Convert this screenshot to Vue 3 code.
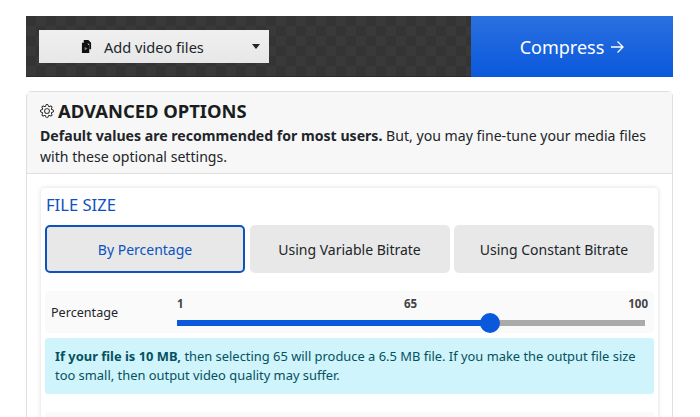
<script setup>
const tabs = [
  { label: 'By Percentage', active: true },
  { label: 'Using Variable Bitrate', active: false },
  { label: 'Using Constant Bitrate', active: false }
]
const fill = 66.9
</script>

<template>
  <div class="page">
    <div class="topbar">
      <div class="left">
        <button class="add">
          <svg class="fileicon" viewBox="0 0 12 14" width="11" height="13">
            <path d="M3 0h5l3 3v7H9V4H3z" fill="#111" />
            <path d="M1 3h5l3 3v8H1z" fill="#111" />
            <path d="M4 7.5l3 1.8-3 1.8z" fill="#888" />
          </svg>
          <span class="addtext">Add video files</span>
          <span class="caret"></span>
        </button>
      </div>
      <div class="compress">Compress <span class="arrow">
        <svg viewBox="0 0 14 14" width="14" height="14"><path d="M1 7h12M7.5 1.5L13 7l-5.5 5.5" fill="none" stroke="#fff" stroke-width="1.3" /></svg>
      </span></div>
    </div>

    <div class="card">
      <div class="cardhead">
        <h2 class="title">
          <svg class="gear" viewBox="0 0 16 16" width="14" height="14" fill="#222">
            <path d="M8 4.754a3.246 3.246 0 1 0 0 6.492 3.246 3.246 0 0 0 0-6.492zM5.754 8a2.246 2.246 0 1 1 4.492 0 2.246 2.246 0 0 1-4.492 0z" />
            <path d="M9.796 1.343c-.527-1.79-3.065-1.79-3.592 0l-.094.319a.873.873 0 0 1-1.255.52l-.292-.16c-1.64-.892-3.433.902-2.54 2.541l.159.292a.873.873 0 0 1-.52 1.255l-.319.094c-1.79.527-1.79 3.065 0 3.592l.319.094a.873.873 0 0 1 .52 1.255l-.16.292c-.892 1.64.901 3.434 2.541 2.54l.292-.159a.873.873 0 0 1 1.255.52l.094.319c.527 1.79 3.065 1.79 3.592 0l.094-.319a.873.873 0 0 1 1.255-.52l.292.16c1.64.893 3.434-.902 2.54-2.541l-.159-.292a.873.873 0 0 1 .52-1.255l.319-.094c1.79-.527 1.79-3.065 0-3.592l-.319-.094a.873.873 0 0 1-.52-1.255l.16-.292c.893-1.64-.902-3.433-2.541-2.54l-.292.159a.873.873 0 0 1-1.255-.52l-.094-.319zm-2.633.283c.246-.835 1.428-.835 1.674 0l.094.319a1.873 1.873 0 0 0 2.693 1.115l.291-.16c.764-.415 1.6.42 1.184 1.185l-.159.292a1.873 1.873 0 0 0 1.116 2.692l.318.094c.835.246.835 1.428 0 1.674l-.319.094a1.873 1.873 0 0 0-1.115 2.693l.16.291c.415.764-.42 1.6-1.185 1.184l-.291-.159a1.873 1.873 0 0 0-2.693 1.116l-.094.318c-.246.835-1.428.835-1.674 0l-.094-.319a1.873 1.873 0 0 0-2.692-1.115l-.292.16c-.764.415-1.6-.42-1.184-1.185l.159-.291A1.873 1.873 0 0 0 1.945 8.93l-.319-.094c-.835-.246-.835-1.428 0-1.674l.319-.094A1.873 1.873 0 0 0 3.06 4.377l-.16-.292c-.415-.764.42-1.6 1.185-1.184l.292.159a1.873 1.873 0 0 0 2.692-1.115l.094-.319z" />
          </svg>
          ADVANCED OPTIONS
        </h2>
        <p class="desc"><b>Default values are recommended for most users.</b> But, you may fine-tune your media files with these optional settings.</p>
      </div>

      <div class="cardbody">
        <div class="panel">
          <h3 class="paneltitle">FILE SIZE</h3>
          <div class="tabs">
            <button v-for="t in tabs" :key="t.label" class="tab" :class="{ active: t.active }">{{ t.label }}</button>
          </div>

          <div class="sliderrow">
            <div class="sliderlabel">Percentage</div>
            <div class="slider">
              <div class="scale"><span>1</span><span class="mid">65</span><span class="max">100</span></div>
              <div class="track">
                <div class="fill" :style="{ width: fill + '%' }"></div>
                <div class="thumb" :style="{ left: fill + '%' }"></div>
              </div>
            </div>
          </div>

          <div class="alert"><b>If your file is 10 MB,</b> then selecting 65 will produce a 6.5 MB file. If you make the output file size too small, then output video quality may suffer.</div>

          <div class="nextrow"></div>
        </div>
      </div>
    </div>
  </div>
</template>

<style scoped>
.page {
  height: 417px;
  overflow: hidden;
  box-sizing: border-box;
  padding: 16px 27px 0 26px;
  font-family: "Noto Sans", "Open Sans", sans-serif;
  color: #212529;
  background: #fff;
}
.topbar {
  display: flex;
  height: 61px;
}
.left {
  flex: 1;
  padding: 14px 13px;
  background-color: #363636;
  background-image: conic-gradient(#393939 25%, #343434 0 50%, #393939 0 75%, #343434 0);
  background-size: 20px 20px;
  border-bottom: 1px solid #2a2a2a;
  box-sizing: border-box;
}
.add {
  display: flex;
  align-items: center;
  width: 230px;
  height: 33px;
  padding: 0;
  border: 0;
  background: linear-gradient(#f0f0f0, #e7e7e7);
  font-family: inherit;
  font-size: 14.6px;
  color: #212529;
  position: relative;
}
.fileicon { margin-left: 42px; }
.addtext { margin-left: 12px; }
.caret {
  position: absolute;
  left: 213px;
  top: 14px;
  border-left: 4.5px solid transparent;
  border-right: 4.5px solid transparent;
  border-top: 5px solid #222;
}
.compress {
  width: 202px;
  display: flex;
  align-items: center;
  justify-content: center;
  gap: 6px;
  background: linear-gradient(#2a70e0, #0a58dc);
  color: #fff;
  font-size: 18px;
}
.arrow { display: flex; }
.card {
  margin-top: 14px;
  border: 1px solid #dfdfdf;
  border-radius: 5px 5px 0 0;
}
.cardhead {
  background: #f7f7f7;
  border-bottom: 1px solid #dfdfdf;
  height: 82px;
  box-sizing: border-box;
  padding: 6px 13px 0;
}
.title {
  margin: 0;
  display: flex;
  align-items: center;
  gap: 4px;
  font-size: 18.4px;
  line-height: 26px;
  font-weight: 700;
  color: #1a1d20;
}
.desc {
  margin: 1px 0 0;
  font-size: 14.1px;
  line-height: 21px;
}
.desc b { font-weight: 700; }
.cardbody { padding: 14px; }
.panel {
  padding: 5px 4px 0;
  border-radius: 4px;
  box-shadow: 0 0 5px rgba(0, 0, 0, 0.14);
}
.paneltitle {
  margin: 0;
  font-size: 16.6px;
  line-height: 24px;
  font-weight: 400;
  color: #0d52bf;
  padding-left: 1px;
}
.tabs {
  display: grid;
  grid-template-columns: repeat(3, 1fr);
  gap: 4.5px;
  margin-top: 8px;
}
.tab {
  min-width: 0;
  height: 48px;
  border: 0;
  border-radius: 5px;
  background: #e8e8e8;
  font-family: inherit;
  font-size: 14px;
  color: #212529;
  padding: 0;
}
.tab.active {
  border: 2px solid #0d52bf;
  color: #0d52bf;
}
.sliderrow {
  display: flex;
  margin-top: 18px;
  height: 42px;
  background: #fafafa;
  border-radius: 4px;
}
.sliderlabel {
  width: 132px;
  padding: 1px 0 0 6px;
  box-sizing: border-box;
  font-size: 12.6px;
  line-height: 42px;
}
.slider {
  width: 468px;
}
.scale {
  display: flex;
  justify-content: space-between;
  font-size: 11.5px;
  font-weight: 700;
  color: #444;
  line-height: 14px;
  padding-top: 6px;
  position: relative;
}
.max { margin-right: -3px; }
.mid {
  position: absolute;
  left: 227px;
}
.track {
  position: relative;
  height: 6px;
  margin-top: 9px;
  background: #aaa;
}
.fill {
  height: 100%;
  background: #0a58dc;
}
.thumb {
  position: absolute;
  top: -7px;
  width: 20px;
  height: 20px;
  margin-left: -10px;
  border-radius: 50%;
  background: #0a58dc;
}
.alert {
  margin-top: 5px;
  height: 56px;
  box-sizing: border-box;
  padding: 9px 10px;
  background: #cff4fc;
  border-radius: 3px;
  color: #055160;
  font-size: 12.9px;
  line-height: 19px;
}
.nextrow {
  margin-top: 18px;
  height: 30px;
  background: #fafafa;
}
</style>
